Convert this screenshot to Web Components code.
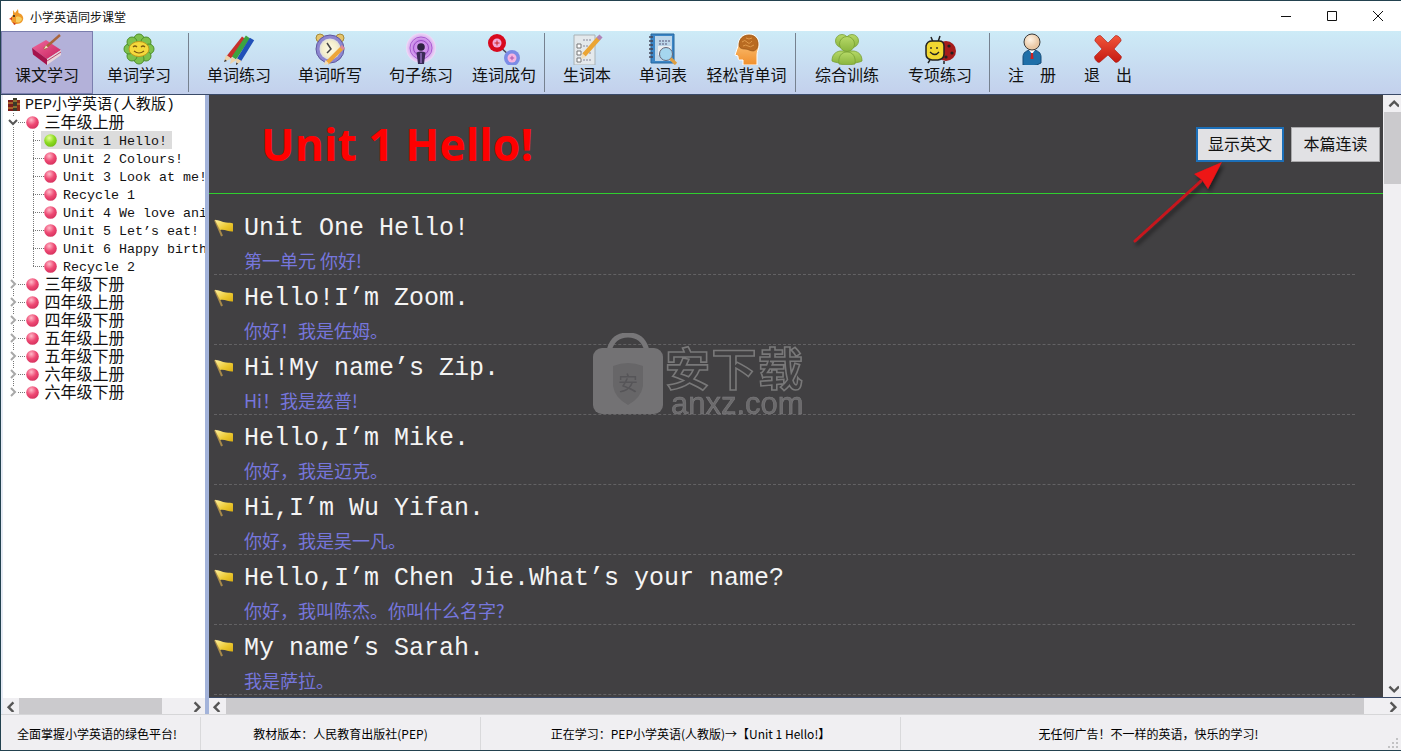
<!DOCTYPE html>
<html lang="zh">
<head>
<meta charset="utf-8">
<title>小学英语同步课堂</title>
<style>
    html, body { margin: 0; padding: 0; width: 1401px; height: 751px; overflow: hidden; background: #f0eff2; }
    body { font-family: "Noto Sans CJK SC", "Liberation Sans", sans-serif; }
</style>
</head>
<body>
<app-window>
    <title-bar slot="title">小学英语同步课堂</title-bar>
    <tool-bar slot="tools">
        <tool-button icon="book" w="92" active>课文学习</tool-button>
        <tool-button icon="flower" w="92">单词学习</tool-button>
        <tool-sep></tool-sep>
        <tool-button icon="pencils" w="92">单词练习</tool-button>
        <tool-button icon="clock" w="90">单词听写</tool-button>
        <tool-button icon="speaker" w="92">句子练习</tool-button>
        <tool-button icon="link" w="74">连词成句</tool-button>
        <tool-sep></tool-sep>
        <tool-button icon="checklist" w="76">生词本</tool-button>
        <tool-button icon="notebook" w="76">单词表</tool-button>
        <tool-button icon="head" w="91">轻松背单词</tool-button>
        <tool-sep></tool-sep>
        <tool-button icon="people" w="94">综合训练</tool-button>
        <tool-button icon="bug" w="92">专项练习</tool-button>
        <tool-sep></tool-sep>
        <tool-button icon="user" w="76">注　册</tool-button>
        <tool-button icon="cross" w="76">退　出</tool-button>
    </tool-bar>
    <tree-pane slot="tree">
        <tree-row kind="root">PEP小学英语(人教版)</tree-row>
        <tree-row kind="open">三年级上册</tree-row>
        <tree-row kind="leaf" selected>Unit 1 Hello!</tree-row>
        <tree-row kind="leaf">Unit 2 Colours!</tree-row>
        <tree-row kind="leaf">Unit 3 Look at me!</tree-row>
        <tree-row kind="leaf">Recycle 1</tree-row>
        <tree-row kind="leaf">Unit 4 We love animals</tree-row>
        <tree-row kind="leaf">Unit 5 Let’s eat!</tree-row>
        <tree-row kind="leaf">Unit 6 Happy birthday!</tree-row>
        <tree-row kind="leaf" last>Recycle 2</tree-row>
        <tree-row kind="closed">三年级下册</tree-row>
        <tree-row kind="closed">四年级上册</tree-row>
        <tree-row kind="closed">四年级下册</tree-row>
        <tree-row kind="closed">五年级上册</tree-row>
        <tree-row kind="closed">五年级下册</tree-row>
        <tree-row kind="closed">六年级上册</tree-row>
        <tree-row kind="closed" end>六年级下册</tree-row>
    </tree-pane>
    <lesson-pane slot="lesson" heading="Unit 1 Hello!">
        <lesson-row><span slot="en">Unit One Hello!</span><span slot="zh">第一单元 你好!</span></lesson-row>
        <lesson-row><span slot="en">Hello!I’m Zoom.</span><span slot="zh">你好！我是佐姆。</span></lesson-row>
        <lesson-row><span slot="en">Hi!My name’s Zip.</span><span slot="zh">Hi！我是兹普!</span></lesson-row>
        <lesson-row><span slot="en">Hello,I’m Mike.</span><span slot="zh">你好，我是迈克。</span></lesson-row>
        <lesson-row><span slot="en">Hi,I’m Wu Yifan.</span><span slot="zh">你好，我是吴一凡。</span></lesson-row>
        <lesson-row><span slot="en">Hello,I’m Chen Jie.What’s your name?</span><span slot="zh">你好，我叫陈杰。你叫什么名字?</span></lesson-row>
        <lesson-row><span slot="en">My name’s Sarah.</span><span slot="zh">我是萨拉。</span></lesson-row>
    </lesson-pane>
    <status-bar slot="status">
        <status-cell w="200" pad="7">全面掌握小学英语的绿色平台!</status-cell>
        <status-cell w="280">教材版本：人民教育出版社(PEP)</status-cell>
        <status-cell w="420">正在学习：PEP小学英语(人教版)→【Unit 1 Hello!】</status-cell>
        <status-cell w="500" pad="5" end>无任何广告！不一样的英语，快乐的学习!</status-cell>
    </status-bar>
</app-window>

<script>
// toolbar pictures, all on a 32x32 box
const ICONS = {
    book: `<defs><linearGradient id="g" x1="0" y1="0" x2="1" y2="1"><stop offset="0" stop-color="#f06a9c"/><stop offset="1" stop-color="#c81f5e"/></linearGradient></defs>
        <path d="M1 15 15 7l15 10-14 9z" fill="url(#g)"/>
        <path d="M1 15l15 11v6L2 21.500z" fill="#a5134c"/>
        <path d="M16 26l14-9v5L16 32z" fill="#e8d5da"/>
        <path d="M16 28l14-9" stroke="#b9476f" fill="none"/>
        <path d="M13 16 29 2" stroke="#a9653c" stroke-width="2.400" fill="none"/>
        <path d="M13 16l4-1.500-2-2z" fill="#f2e3c4"/>`,
    flower: `<g fill="#7dc14b" stroke="#4d8f2c">
        <circle cx="16" cy="6" r="5"/><circle cx="23" cy="9" r="5"/><circle cx="26" cy="16" r="5"/><circle cx="23" cy="23" r="5"/>
        <circle cx="16" cy="26" r="5"/><circle cx="9" cy="23" r="5"/><circle cx="6" cy="16" r="5"/><circle cx="9" cy="9" r="5"/></g>
        <ellipse cx="16" cy="16" rx="10" ry="7.500" fill="#f4d93c" stroke="#c29a1e"/>
        <path d="M10 14q2-2 4 0M18 14q2-2 4 0M11 18q5 4 10 0" stroke="#7a5a10" stroke-width="1.200" fill="none"/>`,
    pencils: `<g stroke-width="5" fill="none">
        <path d="M6 24 21 5" stroke="#c8302c"/><path d="M11 25 25 4" stroke="#3da33f"/><path d="M16 27 29 6" stroke="#2050b8"/></g>
        <path d="M1 29l2-7 5 3.500zM7 31l1.500-7 5 3zM13 32l.5-7 5 3z" fill="#edd3a9"/>
        <path d="M1 29l1-2.500 2 1.500zM13 32l.2-2.500 2 1.200z" fill="#333"/>`,
    clock: `<defs><radialGradient id="g"><stop offset="0" stop-color="#fffbe8"/><stop offset=".75" stop-color="#f4eecb"/><stop offset="1" stop-color="#ddd"/></radialGradient></defs>
        <circle cx="6" cy="5" r="4" fill="#e4c46c" stroke="#a58a3a"/><circle cx="26" cy="5" r="4" fill="#e4c46c" stroke="#a58a3a"/>
        <circle cx="16" cy="16" r="14" fill="#8d86cf" stroke="#5f589f"/><circle cx="16" cy="16" r="10.500" fill="url(#g)"/>
        <path d="M13 10l4 6-4 4" stroke="#444" stroke-width="1.500" fill="none"/>
        <path d="M13 30 29 14" stroke="#eda63a" stroke-width="4"/><path d="M10 32l1.500-5 3.500 3.500z" fill="#f3dcb6"/><path d="M27.500 15.500l2-2" stroke="#d98aa0" stroke-width="4"/>`,
    speaker: `<defs><radialGradient id="g"><stop offset="0" stop-color="#d9a0f2"/><stop offset=".55" stop-color="#c98ae8"/><stop offset="1" stop-color="#efdcf8"/></radialGradient></defs>
        <circle cx="16" cy="15" r="15" fill="url(#g)"/><circle cx="16" cy="15" r="11" fill="none" stroke="#a95bd0"/><circle cx="16" cy="15" r="7.500" fill="none" stroke="#9a4cc4"/>
        <circle cx="16" cy="14" r="3.800" fill="#2d2240"/><path d="M11.500 19.500q4.500-2 9 0L19 31h-6z" fill="#3a2a55"/><path d="M15 20h2v10h-2z" fill="#7a5aa0"/>`,
    link: `<path d="M10 12 23 24" stroke="#445" stroke-width="1.500"/>
        <circle cx="9" cy="10" r="9" fill="#d8091e"/><circle cx="9" cy="10" r="4.500" fill="#f1a8d8"/><path d="M6.500 10h5M9 7.500v5" stroke="#c22"/>
        <circle cx="24" cy="25" r="8" fill="#7b8ce6"/><circle cx="24" cy="25" r="4.500" fill="#f6b4e2"/><path d="M21.800 25h4.400M24 22.800v4.400" stroke="#a5a"/>`,
    checklist: `<path d="M3 2h21v30H3z" fill="#e4e9ec" stroke="#a9b2b6"/>
        <g fill="#fff" stroke="#777"><path d="M6 11h4v4H6zM6 18h4v4H6zM6 25h4v4H6z"/></g>
        <path d="M12 7h8M12 13h5M12 20h8M12 27h9" stroke="#889" stroke-dasharray="2 1"/>
        <path d="M13 22 28 5" stroke="#eba534" stroke-width="4.500"/><path d="M27 6l3-3" stroke="#b084b8" stroke-width="4.500"/><path d="M10 26l1-5.500 4 3.500z" fill="#f2dfba"/>`,
    notebook: `<path d="M4 1h23v29H4z" fill="#3c86c6" stroke="#25669e"/><path d="M8 3h17v25H8z" fill="#bcd6ea"/>
        <path d="M2 4h4M2 8h4M2 12h4M2 16h4M2 20h4M2 24h4" stroke="#445" stroke-width="1.500"/>
        <path d="M12 8h11M12 11h9" stroke="#557" stroke-dasharray="2 1"/><path d="M11 13h13v9H11z" fill="#e9eef2"/>
        <circle cx="19" cy="21" r="6.500" fill="#a5d6ee" stroke="#667"/><path d="M23.500 25.500 29 31" stroke="#e0a040" stroke-width="3.200"/>`,
    head: `<defs><linearGradient id="g" x1="0" y1="0" x2="0" y2="1"><stop offset="0" stop-color="#ffcf8a"/><stop offset="1" stop-color="#f08f2c"/></linearGradient></defs>
        <path d="M7 13C7 5 12 1 18 1c7 0 10 5 10 11 0 4-2 6-2 10v10H12v-5H8c-1 0-1-4-1-4l-3-1z" fill="url(#g)" stroke="#fff"/>
        <path d="M8 12c0-6 4-10 10-10 6 0 9 4 9 9 0 5-3 7-5 7-3 0-5-2-8-2-3 0-6-1-6-4z" fill="#b96b22" stroke="#8a4a12" stroke-width=".6"/>
        <path d="M11 9q3-3 5 0t5-1M12 13q3-2 5 0t6-1M15 5q3 2 6 0" stroke="#e09a4a" fill="none"/>`,
    people: `<defs><linearGradient id="g" x1="0" y1="0" x2="0" y2="1"><stop offset="0" stop-color="#b6d968"/><stop offset="1" stop-color="#8ab53e"/></linearGradient></defs>
        <g fill="url(#g)" stroke="#77a034" stroke-width=".8">
        <circle cx="11" cy="8" r="6.500"/><circle cx="21" cy="8" r="6.500"/>
        <path d="M1 28c0-6 3-9 8-10h14c5 1 8 4 8 10-4 3-26 3-30 0z"/>
        <path d="M8 31c-1-7 2-12 8-12s9 5 8 12c-5 1-11 1-16 0z"/>
        <circle cx="16" cy="11" r="7.500"/></g>`,
    bug: `<circle cx="22" cy="18" r="10" fill="#a51c1c"/><circle cx="25" cy="13" r="1.600" fill="#222"/><circle cx="28" cy="20" r="1.600" fill="#222"/><circle cx="22" cy="24" r="1.600" fill="#222"/>
        <path d="M7 4 9 9M16 3l-2 6M6 27l-2 3M20 28v3" stroke="#222" stroke-width="1.500"/>
        <path d="M2 13q1-5 6-5h7q5 0 5 5v8q0 5-6 6H8q-6-1-6-6z" fill="#f2d831" stroke="#222" stroke-width="1.500"/>
        <path d="M7 14v2M13 14v2M6 19q5 5 9 0" stroke="#222" stroke-width="1.300" fill="none"/>`,
    user: `<defs><radialGradient id="g" cx=".4" cy=".35"><stop offset="0" stop-color="#fff4e6"/><stop offset="1" stop-color="#eac9a6"/></radialGradient></defs>
        <path d="M7 32V24c0-4 3-7 9-7s9 3 9 7v6q-9 5-18 2z" fill="#1f6fa8" stroke="#164c78"/>
        <path d="M13 17l3 4 3-4z" fill="#fff"/><path d="M15 20h2l.5 6h-3z" fill="#c22"/>
        <circle cx="16" cy="9" r="8" fill="url(#g)" stroke="#3a3a3a"/>`,
    cross: `<defs><linearGradient id="g" x1="0" y1="0" x2="0" y2="1"><stop offset="0" stop-color="#f2563a"/><stop offset="1" stop-color="#c41a12"/></linearGradient></defs>
        <path d="M3 8c-1-2 4-7 6-5l7 7 7-7c2-2 7 3 6 5l-7 8 7 7c2 2-4 8-6 6l-7-7-8 7c-2 2-7-4-5-6l7-7z" fill="url(#g)" stroke="#a81810" stroke-width=".6"/>`
};

const MONO = '"Liberation Mono", "DejaVu Sans Mono", "Noto Sans CJK SC", monospace';
const CJK = '"Noto Sans CJK SC", "Liberation Sans", sans-serif';

class BaseElement extends HTMLElement {
    connectedCallback() {
        if (this.shadowRoot) return;
        this.attachShadow({ mode: 'open' });
        this.shadowRoot.innerHTML = this.markup();
    }
}

class AppWindow extends BaseElement {
    markup() {
        return `<style>
            :host { display: flex; flex-direction: column; box-sizing: border-box; width: 1401px; height: 751px;
                border: 1px solid #23424f; border-right: 0; background: #f0eff2; }
            .main { display: flex; height: 620px; flex: none; background: #3a4a68; padding-top: 1px; box-sizing: border-box; }
            .split { width: 4px; background: #a3b3da; flex: none; }
            .gutter { width: 2px; background: #e6ebf5; flex: none; }
        </style>
        <slot name="title"></slot>
        <slot name="tools"></slot>
        <div class="main">
            <div class="gutter"></div>
            <slot name="tree"></slot>
            <div class="split"></div>
            <slot name="lesson"></slot>
        </div>
        <slot name="status"></slot>`;
    }
}

class TitleBar extends BaseElement {
    markup() {
        return `<style>
            :host { display: flex; align-items: center; height: 30px; background: #fff; color: #111; font: 12px ${CJK}; flex: none; }
            .ico { margin: 0 6px 0 8px; flex: none; }
            .text { flex: 1; }
            .ctl { width: 46px; height: 30px; display: flex; align-items: center; justify-content: center; }
        </style>
        <svg class="ico" width="15" height="17" viewBox="0 0 15 17">
            <path d="M4 2 6 5 9 1l.5 4C13 6 15 9 14 12c-1 3-4 4-7 4-3 0-5-2-5-5 0-2 1-3 2-4z" fill="#ef9a2a"/>
            <path d="M3 9 0 11l3 1z" fill="#d8401e"/><circle cx="5" cy="8" r="1" fill="#222"/>
            <path d="M7 9c3-1 5 0 6 2-1 3-3 4-6 3z" fill="#f7cf62"/><path d="M4 14l1 3 2-1z" fill="#c8301a"/>
        </svg>
        <span class="text"><slot></slot></span>
        <span class="ctl"><svg width="12" height="12"><path d="M1 6.500h10" stroke="#111"/></svg></span>
        <span class="ctl"><svg width="12" height="12"><path d="M1.500 1.500h9v9h-9z" stroke="#111" fill="none"/></svg></span>
        <span class="ctl"><svg width="12" height="12"><path d="M1 1l10 10M11 1 1 11" stroke="#111"/></svg></span>`;
    }
}

class ToolBar extends BaseElement {
    markup() {
        return `<style>
            :host { display: flex; height: 63px; flex: none; box-sizing: border-box;
                background: linear-gradient(#cdebf7, #c3d0ec); }
        </style><slot></slot>`;
    }
}

class ToolButton extends BaseElement {
    markup() {
        const active = this.hasAttribute('active');
        return `<style>
            :host { display: flex; flex-direction: column; align-items: center; box-sizing: border-box; flex: none;
                width: ${this.getAttribute('w')}px; height: 63px; padding-top: 2px; color: #111; font: 16px/20px ${CJK};
                ${active ? 'background: #b3b1d9; border: 1px solid #7a7eae; padding-top: 1px;' : ''} }
            svg { display: block; flex: none; }
            .label { margin-top: -1px; white-space: nowrap; }
        </style>
        <svg width="32" height="32" viewBox="0 0 32 32">${ICONS[this.getAttribute('icon')]}</svg>
        <span class="label"><slot></slot></span>`;
    }
}

class ToolSep extends BaseElement {
    markup() {
        return `<style>
            :host { display: block; flex: none; width: 1px; height: 59px; margin: 2px 4px 0 3px; background: #76818f; }
        </style>`;
    }
}

class ScrollBar extends BaseElement {
    markup() {
        const vertical = this.getAttribute('orient') === 'v';
        const a = vertical
            ? ['M2 7l4-4 4 4', 'M2 3l4 4 4-4']
            : ['M7 2 3 6l4 4', 'M3 2l4 4-4 4'];
        const chev = d => `<svg class="arrow" width="12" height="12" viewBox="0 0 10 10"><path d="${d}" fill="none" stroke="#555" stroke-width="2"/></svg>`;
        return `<style>
            :host { display: flex; flex: none; background: #f0eff2; box-sizing: border-box;
                flex-direction: ${vertical ? 'column' : 'row'};
                ${vertical ? 'width: 18px; padding-left: 1px;' : 'height: 16px;'} }
            .btn { flex: none; display: flex; align-items: center; justify-content: center;
                ${vertical ? 'height: 17px;' : 'width: 16px;'} }
            .track { flex: 1; display: flex; flex-direction: ${vertical ? 'column' : 'row'}; min-width: 0; min-height: 0; }
            .thumb { background: #cbcacd; flex: none; ${vertical
                ? `height: ${this.getAttribute('size')}px;`
                : `width: ${this.getAttribute('size')}px;`} margin-${vertical ? 'top' : 'left'}: ${this.getAttribute('start') || 0}px; }
        </style>
        <span class="btn">${chev(a[0])}</span>
        <span class="track"><span class="thumb"></span></span>
        <span class="btn">${chev(a[1])}</span>`;
    }
}

class TreePane extends BaseElement {
    markup() {
        return `<style>
            :host { display: flex; flex-direction: column; width: 202px; flex: none; background: #fff; }
            .rows { flex: 1; overflow: hidden; }
        </style>
        <div class="rows"><slot></slot></div>
        <scroll-bar orient="h" start="0" size="143"></scroll-bar>`;
    }
}

class TreeRow extends BaseElement {
    markup() {
        const kind = this.getAttribute('kind');
        const leaf = kind === 'leaf';
        const green = this.hasAttribute('selected');
        const c = green ? ['#e8ff9a', '#8edc22', '#6ab80e'] : ['#ffb9c8', '#ee4a74', '#d02a58'];
        const ball = `<svg class="ball" width="13" height="13" viewBox="0 0 13 13">
            <defs><radialGradient id="b" cx=".4" cy=".3" r=".8"><stop offset="0" stop-color="${c[0]}"/><stop offset=".5" stop-color="${c[1]}"/><stop offset="1" stop-color="${c[2]}"/></radialGradient></defs>
            <circle cx="6.500" cy="6.500" r="6.300" fill="url(#b)"/></svg>`;
        const dots = 'repeating-linear-gradient(#777 0 1px, transparent 1px 2px)';
        const hdots = 'repeating-linear-gradient(90deg, #777 0 1px, transparent 1px 2px)';
        let bg = 'none';
        if (leaf) {
            bg = `${dots} 10px 0 / 1px 100% no-repeat,
                ${dots} 30px 0 / 1px ${this.hasAttribute('last') ? '9px' : '100%'} no-repeat,
                ${hdots} 30px 9px / 11px 1px no-repeat`;
        } else if (kind !== 'root') {
            bg = `${dots} 10px 0 / 1px ${this.hasAttribute('end') ? '9px' : '100%'} no-repeat,
                ${hdots} 15px 9px / 7px 1px no-repeat`;
        }
        let head = '';
        if (kind === 'root') {
            head = `<svg class="books" width="16" height="16" viewBox="0 0 16 16">
                <path d="M2 4h5v11H2z" fill="#7a1c1c"/><path d="M7 2h4v13H7z" fill="#3a3a2a"/><path d="M11 4h3v11h-3z" fill="#8a2a1a"/>
                <path d="M2 7h5M7 5h4M11 8h3M2 12h5M7 11h4" stroke="#d8a838"/></svg>`;
        } else if (!leaf) {
            const d = kind === 'open' ? 'M1 3l4 4 4-4' : 'M3 1l4 4-4 4';
            head = `<span class="exp"><svg width="10" height="10" viewBox="0 0 10 10"><path d="${d}" fill="none" stroke="${kind === 'open' ? '#555' : '#a8a8a8'}" stroke-width="2"/></svg></span>${ball}`;
        }
        return `<style>
            :host { display: flex; align-items: center; height: 18px; white-space: nowrap; color: #111;
                background: ${bg}; font: 16px/18px ${MONO}; }
            :host([kind="leaf"]) { font-size: 13.340px; padding-left: 38px; }
            :host([kind="root"]) { padding-left: 3px; font-size: 15px; }
            :host([kind="open"]), :host([kind="closed"]) { padding-left: 5px; }
            .books { margin-right: 3px; flex: none; }
            .exp { width: 10px; height: 10px; flex: none; background: #fff; display: flex; margin-right: 7.500px; }
            .ball { flex: none; }
            .label { display: flex; align-items: center; height: 18px; flex: none; padding-right: 5px; }
            .label .ball { margin: 0 6px 0 3px; }
            .txt { margin-top: 4px; line-height: 18px; }
            .top { margin-top: 3px; }
            .plain { margin-left: 6px; }
            .sel { background: #dcdcdc; }
        </style>
        ${leaf
            ? `<span class="label ${green ? 'sel' : ''}">${ball}<span class="txt"><slot></slot></span></span>`
            : `${head}<span class="top ${kind === 'root' ? '' : 'plain'}"><slot></slot></span>`}`;
    }
}

class LessonPane extends BaseElement {
    markup() {
        return `<style>
            :host { display: flex; flex-direction: column; flex: 1; min-width: 0; position: relative; }
            .top { display: flex; flex: 1; min-height: 0; }
            .page { flex: 1; min-width: 0; background: #414042; overflow: hidden; position: relative; }
            .head { display: flex; align-items: flex-start; justify-content: space-between; box-sizing: border-box; height: 99px;
                border-bottom: 1px solid #2fcf2f; padding: 0 3px 0 52px; }
            h1 { margin: 17px 0 0; font: 700 44.500px/64px "Open Sans", "Liberation Sans", sans-serif; color: #ff0000; white-space: nowrap; }
            .btns { display: flex; gap: 7px; margin-top: 32px; }
            .btn { box-sizing: border-box; width: 89px; height: 35px; padding-bottom: 3px; display: flex; align-items: center; justify-content: center;
                background: #e1e1e4; color: #111; border: 1px solid #a9a9ab; font: 16px ${CJK}; }
            .btn.on { width: 88px; border: 2px solid #1c6fb8; }
            .rows { padding: 11px 28px 0 5px; }
            .gap { height: 1px; flex: none; }
            .mark { position: absolute; left: 383px; top: 238px; opacity: .95; pointer-events: none; }
            .mark svg { display: block; }
            .cn { position: absolute; left: 73px; top: 6px; font: 700 45px/56px ${CJK}; letter-spacing: 1.500px;
                color: transparent; -webkit-text-stroke: 1.600px #7c7c7c; white-space: nowrap; }
            .url { position: absolute; left: 79px; top: 53px; font: 31px/36px "Liberation Sans", sans-serif; color: #6e6d6f;
                -webkit-text-stroke: .5px #838284; white-space: nowrap; }
            .arrow { position: absolute; left: 915px; top: 55px; pointer-events: none; }
        </style>
        <div class="top">
            <div class="page">
                <div class="head">
                    <h1>${this.getAttribute('heading')}</h1>
                    <div class="btns"><span class="btn on">显示英文</span><span class="btn">本篇连读</span></div>
                </div>
                <div class="rows"><slot></slot></div>
                <div class="mark">
                    <svg width="72" height="84" viewBox="0 0 72 84">
                        <path d="M17 18C20 5 28 2 36 2s16 3 19 16" fill="none" stroke="#7a797b" stroke-width="5"/>
                        <rect x="1" y="15" width="70" height="66" rx="9" fill="#767577"/>
                        <path d="M21 33q15-6 30 0v20q-2 12-15 19-13-7-15-19z" fill="#6a696b"/>
                        <text x="36" y="58" text-anchor="middle" font-size="20" fill="#58575a" font-family="Noto Sans CJK SC">安</text>
                    </svg>
                    <span class="cn">安下载</span>
                    <span class="url">anxz.com</span>
                </div>
                <svg class="arrow" width="110" height="100" viewBox="0 0 110 100">
                    <defs><filter id="s" x="-20%" y="-20%" width="140%" height="140%"><feDropShadow dx="2" dy="3" stdDeviation="2" flood-color="#000" flood-opacity=".55"/></filter></defs>
                    <g filter="url(#s)"><path d="M11 91 77 31" stroke="#c8141c" stroke-width="3" stroke-linecap="round"/>
                    <path d="M98 12 84 39 78 30 70 24z" fill="#ee1218"/></g>
                </svg>
            </div>
            <scroll-bar orient="v" start="0" size="72"></scroll-bar>
        </div>
        <div class="gap"></div>
        <scroll-bar orient="h" start="1" size="1138"></scroll-bar>`;
    }
}

class LessonRow extends BaseElement {
    markup() {
        return `<style>
            :host { display: flex; box-sizing: border-box; height: 70px; gap: 10px; border-bottom: 1px dashed #636264; }
            .flag { flex: none; margin-top: 14px; display: block; }
            .text { display: flex; flex-direction: column; min-width: 0; }
            .en { font: 25px/34px ${MONO}; color: #f4f4f4; margin-top: 7px; white-space: nowrap; }
            .zh { font: 18px/26px ${CJK}; color: #7676dc; margin-top: 1px; white-space: nowrap; }
        </style>
        <svg class="flag" width="20" height="18" viewBox="0 0 20 18">
            <defs><linearGradient id="f" x1="0" y1="0" x2="1" y2="1"><stop offset="0" stop-color="#fff2a0"/><stop offset=".6" stop-color="#ecc830"/><stop offset="1" stop-color="#d8ae14"/></linearGradient></defs>
            <path d="M1 1l7 16" stroke="#a88a4a" stroke-width="2"/>
            <path d="M1 1C5 1 8 3 12 3.500c3 .5 5 0 7 1v8c-4 .5-8-2.500-13-1.500z" fill="url(#f)"/>
        </svg>
        <div class="text">
            <span class="en"><slot name="en"></slot></span>
            <span class="zh"><slot name="zh"></slot></span>
        </div>`;
    }
}

class StatusBar extends BaseElement {
    markup() {
        return `<style>
            :host { display: flex; flex: none; box-sizing: border-box; height: 36px; background: #f0eff2;
                border-top: 1px solid #d6d6d8; padding-top: 2px; position: relative; }
            .grip { position: absolute; right: 2px; bottom: 2px; }
        </style><slot></slot>
        <svg class="grip" width="11" height="12"><path d="M8 2h2v2H8zM4 6h2v2H4zM8 6h2v2H8zM0 10h2v2H0zM4 10h2v2H4zM8 10h2v2H8z" fill="#c2c2c4"/></svg>`;
    }
}

class StatusCell extends BaseElement {
    markup() {
        return `<style>
            :host { display: flex; align-items: center; justify-content: center; box-sizing: border-box; flex: none; height: 33px;
                width: ${this.getAttribute('w')}px; color: #000; font: 12px ${CJK}; white-space: nowrap;
                padding-right: ${this.getAttribute('pad') || 0}px;
                ${this.hasAttribute('end') ? '' : 'border-right: 1px solid #d9d9db;'} }
        </style><slot></slot>`;
    }
}

customElements.define('app-window', AppWindow);
customElements.define('title-bar', TitleBar);
customElements.define('tool-bar', ToolBar);
customElements.define('tool-button', ToolButton);
customElements.define('tool-sep', ToolSep);
customElements.define('scroll-bar', ScrollBar);
customElements.define('tree-pane', TreePane);
customElements.define('tree-row', TreeRow);
customElements.define('lesson-pane', LessonPane);
customElements.define('lesson-row', LessonRow);
customElements.define('status-bar', StatusBar);
customElements.define('status-cell', StatusCell);
</script>
</body>
</html>
